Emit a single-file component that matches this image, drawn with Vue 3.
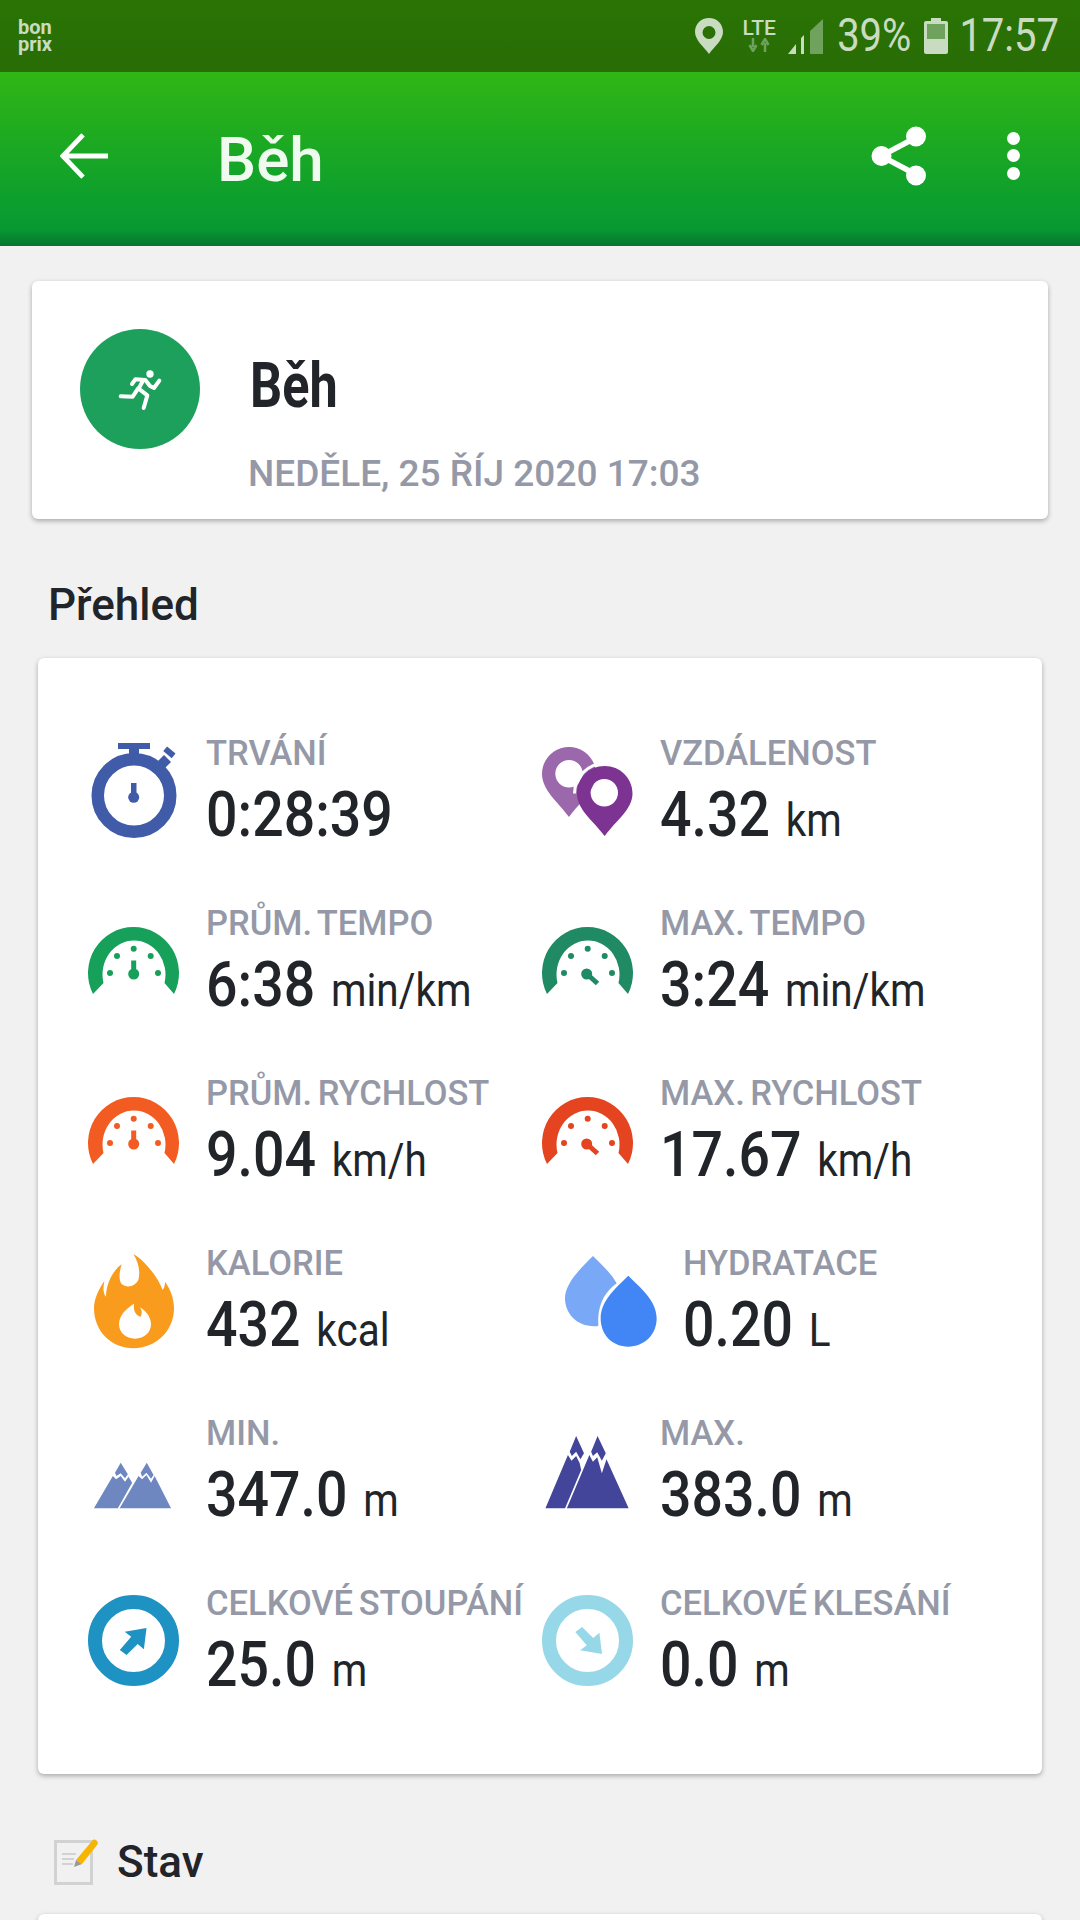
<script setup>
const stats = [
  { icon: "watch", label: "TRVÁNÍ", value: "0:28:39", unit: "" },
  { icon: "pins", label: "VZDÁLENOST", value: "4.32", unit: "km" },
  { icon: "gauge", color: "#16a05a", label: "PRŮM. TEMPO", value: "6:38", unit: "min/km" },
  { icon: "gaugeMax", color: "#1f8a63", label: "MAX. TEMPO", value: "3:24", unit: "min/km" },
  { icon: "gauge", color: "#f25c22", label: "PRŮM. RYCHLOST", value: "9.04", unit: "km/h" },
  { icon: "gaugeMax", color: "#e4441f", label: "MAX. RYCHLOST", value: "17.67", unit: "km/h" },
  { icon: "flame", label: "KALORIE", value: "432", unit: "kcal" },
  { icon: "drops", label: "HYDRATACE", value: "0.20", unit: "L", shift: true },
  { icon: "hillsLow", label: "MIN.", value: "347.0", unit: "m" },
  { icon: "hillsHigh", label: "MAX.", value: "383.0", unit: "m" },
  { icon: "up", label: "CELKOVÉ STOUPÁNÍ", value: "25.0", unit: "m" },
  { icon: "down", label: "CELKOVÉ KLESÁNÍ", value: "0.0", unit: "m" }
];

const dots = [[22, 63], [29, 46], [45.7, 38.7], [62.7, 46], [70, 63]];
</script>

<template>
  <div class="screen">
    <div class="statusbar">
      <div class="brand"><span>bon</span><span>prix</span></div>
      <div class="status-right">
        <svg class="st-pin" width="28" height="36" viewBox="0 0 28 36">
          <path fill-rule="evenodd" d="M14 0C6 0 0 6 0 14c0 8 9 15 14 22 5-7 14-14 14-22C28 6 22 0 14 0zm0 8a6.500 6.500 0 1 1 0 13 6.500 6.500 0 0 1 0-13z" fill="#c9dcc2" />
        </svg>
        <div class="lte">
          <span>LTE</span>
          <svg width="24" height="14" viewBox="0 0 24 14">
            <path d="M6 0v9M2.500 7 6 13l3.500-6M18 14V5M14.500 7 18 1l3.500 6" fill="none" stroke="#6fa25c" stroke-width="2.500" />
          </svg>
        </div>
        <svg class="st-signal" width="35" height="35" viewBox="0 0 35 35">
          <path d="M35 0v35H22V12z" fill="#6fa25c" />
          <path d="M0 35l8-10v10zM13 19l3-3v19h-3z" fill="#c9dcc2" />
        </svg>
        <span class="pct">39%</span>
        <svg class="st-batt" width="24" height="36" viewBox="0 0 24 36">
          <path d="M7 0h10v3h5a2 2 0 0 1 2 2v29a2 2 0 0 1-2 2H2a2 2 0 0 1-2-2V5a2 2 0 0 1 2-2h5z" fill="#c9dcc2" />
          <rect x="3" y="6" width="18" height="15" fill="#6fa25c" />
        </svg>
        <span class="clock">17:57</span>
      </div>
    </div>

    <header class="appbar">
      <svg class="back" width="48" height="48" viewBox="0 0 50 48">
        <path d="M24 2 3 24l21 22M3 24h47" fill="none" stroke="#fff" stroke-width="5" />
      </svg>
      <span class="app-title">Běh</span>
      <svg class="share" width="56" height="60" viewBox="0 0 56 60">
        <path d="M46 11 10 30l36 19" fill="none" stroke="#fff" stroke-width="5.500" />
        <circle cx="45" cy="10.500" r="10" fill="#fff" />
        <circle cx="10.500" cy="30" r="10" fill="#fff" />
        <circle cx="45" cy="49.500" r="10" fill="#fff" />
      </svg>
      <div class="dots"><i></i><i></i><i></i></div>
    </header>

    <main class="content">
      <section class="card head-card">
        <div class="activity">
          <svg width="120" height="120" viewBox="60 87 360 360">
            <circle cx="240" cy="267" r="180" fill="#1ca05c" />
            <circle cx="270" cy="222" r="11" fill="#fff" />
            <g fill="none" stroke="#fff" stroke-linecap="round" stroke-linejoin="round" stroke-width="12">
              <path d="M216 252l10-14 30 2 14 18 12 6 16-22" />
              <path d="M250 240l-14 26 26 20-11 38" />
              <path d="M234 266l-16 24-36-1" />
            </g>
          </svg>
        </div>
        <div class="head-text">
          <div class="head-title">Běh</div>
          <div class="head-date">NEDĚLE, 25 ŘÍJ 2020 17:03</div>
        </div>
      </section>

      <h2 class="section-title overview">Přehled</h2>

      <section class="card stats-card">
        <div v-for="s in stats" :key="s.label" class="stat" :class="{ shift: s.shift }">
          <svg class="stat-icon" width="92" height="100" viewBox="0 0 92 100" v-if="s.icon === 'watch'">
            <path d="M30 3h32v6H51v9H41V9H30z" fill="#405ca8" />
            <path d="M70 21l6-6 7 7-6 6z" fill="#405ca8" />
            <rect x="76" y="9" width="11" height="6" transform="rotate(40 81 12)" fill="#405ca8" />
            <circle cx="46" cy="55.500" r="36.250" fill="none" stroke="#405ca8" stroke-width="12.500" />
            <rect x="43" y="43" width="5.500" height="14" fill="#405ca8" />
            <circle cx="45.700" cy="57.300" r="5.500" fill="#405ca8" />
          </svg>

          <svg class="stat-icon" width="92" height="100" viewBox="0 0 92 100" v-else-if="s.icon === 'pins'">
            <path fill-rule="evenodd" d="M27 7C12 7 0 19 0 34c0 16 16 28 27 43 11-15 27-27 27-43C54 19 42 7 27 7zm0 13a13.700 13.700 0 1 1 0 27.400A13.700 13.700 0 0 1 27 20z" fill="#9b68ac" />
            <path fill-rule="evenodd" d="M62.700 26C47 26 35 38 35 53.500c0 16 16 27 27.700 42.500C74 80.500 90.500 69.500 90.500 53.500 90.500 38 78 26 62.700 26zm-.4 13a13.700 13.700 0 1 1 0 27.400 13.700 13.700 0 0 1 0-27.400z" fill="#7d3391" />
            <path d="M62.700 23.500C46 23.500 32.500 37 32.500 53.500" fill="none" stroke="#fff" stroke-width="3" />
          </svg>

          <svg class="stat-icon" width="92" height="100" viewBox="0 0 92 100" v-else-if="s.icon === 'gauge' || s.icon === 'gaugeMax'" :fill="s.color">
            <path d="M5 84A45.500 46 0 1 1 86 84L76.500 73A31.500 34 0 1 0 15.500 73Z" />
            <circle v-for="d in dots" :key="d[0]" :cx="d[0]" :cy="d[1]" r="3" />
            <template v-if="s.icon === 'gauge'">
              <rect x="43.200" y="50.500" width="5" height="14" />
              <circle cx="45.700" cy="64" r="5.500" />
            </template>
            <template v-else>
              <path d="M45 64l10.500 9.500" :stroke="s.color" stroke-width="5" />
              <circle cx="44.700" cy="64" r="5.500" />
            </template>
          </svg>

          <svg class="stat-icon" width="92" height="100" viewBox="54 510 276 300" v-else-if="s.icon === 'flame'">
            <path fill="#f99c1e" d="M190 522C215 535 262 585 278 630C285 620 285 612 285 605C300 625 312 655 312 685C312 755 255 805 190 805C125 805 72 755 72 685C72 655 88 625 103 603C100 620 98 640 108 650C108 610 130 570 155 553C148 575 145 600 155 612C170 625 195 620 205 600C212 575 205 545 190 522Z" />
            <path fill="#fff" d="M192 671C190 690 195 705 212 710C218 700 215 690 210 682C232 695 243 715 243 733C243 758 222 776 195 776C168 776 147 758 147 733C147 705 170 685 192 671Z" />
          </svg>

          <svg class="stat-icon" width="92" height="100" viewBox="48 30 276 300" v-else-if="s.icon === 'drops'">
            <path fill="#79a8f7" d="M132 48C160 75 190 105 203 130C170 155 145 190 148 258C90 265 48 225 48 175C48 130 95 85 132 48Z" />
            <path fill="#4285f4" d="M238 107C270 140 323 180 323 235C323 285 285 320 238 320C190 320 155 285 155 235C155 180 205 140 238 107Z" />
          </svg>

          <svg class="stat-icon" width="92" height="100" viewBox="8.400 0 257.600 300" preserveAspectRatio="none" v-else-if="s.icon === 'hillsLow'" fill="#6e87c0">
            <path d="M25 265L78 168L87 178L100 168L112 185L122 170L132 188L92 265Z" />
            <path d="M100 128L120 163L112 175L100 160L88 168L84 158Z" />
            <path d="M97 265L150 168L160 178L172 165L185 188L195 168L241 265Z" />
            <path d="M173 128L192 165L185 176L172 158L160 170L156 158Z" />
          </svg>

          <svg class="stat-icon" width="92" height="100" viewBox="1282.400 0 257.600 300" preserveAspectRatio="none" v-else-if="s.icon === 'hillsHigh'" fill="#43459a">
            <path d="M1292 265L1355 105L1365 122L1378 108L1388 130L1392 150L1347 265Z" />
            <path d="M1378 48L1400 100L1390 118L1378 95L1366 108L1360 95Z" />
            <path d="M1352 265L1415 105L1425 125L1437 112L1450 160L1463 118L1525 265Z" />
            <path d="M1438 48L1461 100L1450 122L1437 97L1425 108L1420 95Z" />
          </svg>

          <svg class="stat-icon" width="92" height="100" viewBox="0 0 92 100" v-else-if="s.icon === 'up'">
            <circle cx="45.500" cy="50.500" r="38.500" fill="none" stroke="#1e92c2" stroke-width="14" />
            <path d="M58.500 38L55.900 59.300L49.700 54L38.600 65L31.800 60L43.200 46.700L36.700 41.700Z" fill="#1e92c2" />
          </svg>

          <svg class="stat-icon" width="92" height="100" viewBox="0 0 92 100" v-else>
            <circle cx="45.500" cy="50.500" r="38.500" fill="none" stroke="#97d8e8" stroke-width="14" />
            <path d="M60 64L57.400 42.700L51.200 48L40.100 37L33.300 42L44.700 55.300L38.200 60.300Z" fill="#97d8e8" />
          </svg>

          <div class="stat-text">
            <div class="stat-label">{{ s.label }}</div>
            <div class="stat-value">
              <span class="num">{{ s.value }}</span>
              <span v-if="s.unit" class="unit">{{ s.unit }}</span>
            </div>
          </div>
        </div>
      </section>

      <div class="note-row">
        <svg width="44" height="46" viewBox="0 0 44 46">
          <rect x="1.500" y="2.500" width="36" height="42" fill="#f1f1f1" stroke="#d2d2d2" stroke-width="3" />
          <path d="M8 15h14M8 20h12M8 25h11" stroke="#d2d2d2" stroke-width="2" />
          <path d="M22 21 38 2a3 3 0 0 1 5 4L28 25z" fill="#f7b500" />
          <path d="M22 21l6 4-8 3z" fill="#999" />
        </svg>
        <h2 class="section-title">Stav</h2>
      </div>

      <section class="card next-card"></section>
    </main>
  </div>
</template>

<style scoped>
.screen {
  height: 1920px;
  overflow: hidden;
  background: #f1f1f1;
  font-family: Roboto, "Noto Sans", sans-serif;
  color: #212529;
}

.statusbar {
  height: 72px;
  padding: 0 21px 0 18px;
  display: flex;
  align-items: center;
  justify-content: space-between;
  background: linear-gradient(#2a7404, #286c06);
  color: #c9dcc2;
  box-sizing: border-box;
}

.brand {
  display: flex;
  flex-direction: column;
  font-size: 20px;
  font-weight: 700;
  line-height: 17px;
  width: 36px;
}

.status-right {
  display: flex;
  align-items: center;
}

.st-pin {
  margin-right: 17px;
}

.lte {
  width: 38px;
  height: 36px;
  display: flex;
  flex-direction: column;
  align-items: center;
  font-size: 21px;
  font-weight: 500;
  line-height: 20px;
  margin-right: 10px;
}

.st-signal {
  margin-right: 14px;
}

.pct,
.clock {
  font-size: 40px;
  line-height: 40px;
  white-space: nowrap;
  transform: scaleY(1.14);
}

.pct {
  margin-right: 13px;
}

.st-batt {
  margin-right: 11px;
}

.appbar {
  height: 174px;
  padding: 0 60px 0 60px;
  display: flex;
  align-items: center;
  background: linear-gradient(#30b615 0%, #0ea02c 70%, #089a32 90%, #067530 100%);
  color: #f0fbef;
  box-sizing: border-box;
}

.app-title {
  margin-left: 109px;
  font-size: 62px;
  font-weight: 500;
  flex: 1;
}

.back {
  margin-top: -6px;
}

.share {
  margin: -7px 80px 0 0;
}

.dots {
  display: flex;
  flex-direction: column;
  gap: 4.500px;
  margin-top: -7px;
}

.dots i {
  width: 13px;
  height: 13px;
  border-radius: 50%;
  background: #fff;
}

.card {
  background: #fff;
  border-radius: 6px;
  box-shadow: 0 2px 5px rgba(0, 0, 0, 0.3);
}

.head-card {
  margin: 35px 32px 0;
  height: 238px;
  padding: 48px 48px 0;
  box-sizing: border-box;
  display: flex;
  gap: 50px;
}

.activity {
  width: 120px;
  height: 120px;
}

.head-title {
  font-size: 63px;
  line-height: 72px;
  font-weight: 700;
  margin-top: 21px;
  transform: scaleX(0.8);
  transform-origin: left;
}

.head-date {
  margin-top: 32px;
  margin-left: -2px;
  font-size: 37px;
  line-height: 40px;
  font-weight: 500;
  color: #9599a7;
  white-space: nowrap;
}

.section-title {
  margin: 0;
  font-size: 44px;
  line-height: 48px;
  font-weight: 500;
}

.overview {
  margin: 62px 0 0 48px;
}

.stats-card {
  margin: 29px 38px 0;
  height: 1116px;
  padding: 82px 0 0 50px;
  box-sizing: border-box;
  display: grid;
  grid-template-columns: 454px 1fr;
  grid-auto-rows: 170px;
}

.stat {
  display: flex;
  gap: 26px;
}

.stat.shift {
  padding-left: 23px;
}

.stat-icon {
  flex-shrink: 0;
}

.stat-label {
  font-size: 34.500px;
  line-height: 32px;
  font-weight: 500;
  word-spacing: -3px;
  color: #9599a7;
  white-space: nowrap;
  margin-top: -3px;
}

.stat-value {
  margin-top: 14px;
  white-space: nowrap;
  display: flex;
  align-items: baseline;
  gap: 18px;
  transform: scaleX(0.88);
  transform-origin: left;
}

.num {
  font-size: 63px;
  line-height: 64px;
  font-weight: 500;
}

.unit {
  font-size: 46px;
}

.note-row {
  margin: 64px 0 0 54px;
  display: flex;
  align-items: center;
  gap: 19px;
}

.next-card {
  margin: 28px 38px 0;
  height: 200px;
}
</style>

<style>
html,
body {
  background: #f1f1f1;
}
</style>
